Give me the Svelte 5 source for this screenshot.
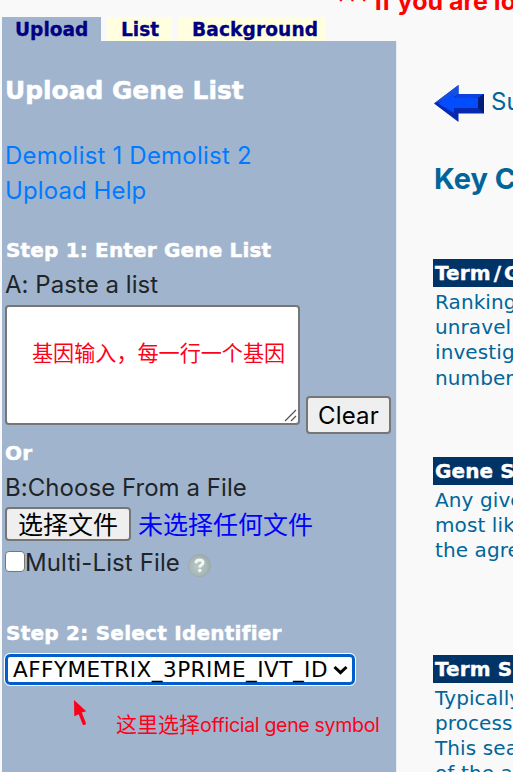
<script>
  const tabs = [
    { label: 'Upload', active: true },
    { label: 'List' },
    { label: 'Background' }
  ];
  const concepts = [
    { title: ['Term', 'G'], lines: ['Ranking', 'unravel', 'investig', 'number'] },
    { title: ['Gene S'], lines: ['Any give', 'most lik', 'the agre'] },
    { title: ['Term S'], lines: ['Typically', 'process', 'This sea', 'of the a'] }
  ];
</script>

<div class="page">
  <aside>
    <nav>
      {#each tabs as tab}
        <a class:active={tab.active} class={tab.label.toLowerCase()}><span>{tab.label}</span></a>
      {/each}
    </nav>
    <div class="panel">
      <h2><span>Upload Gene List</span></h2>
      <div class="links">
        <div><a class="demo">Demolist 1</a> <a class="demo">Demolist 2</a></div>
        <div><a class="help-link">Upload Help</a></div>
      </div>
      <h3 class="step1"><span>Step 1: Enter Gene List</span></h3>
      <div class="row paste"><span>A: Paste a list</span></div>
      <div class="entry">
        <div class="textarea">
          <span class="note">基因输入，每一行一个基因</span>
          <svg class="grip" width="13" height="13" viewBox="0 0 13 13"><path d="M1 12L12 1M7 12L12 7" /></svg>
        </div>
        <button class="clear"><span>Clear</span></button>
      </div>
      <h3 class="or"><span>Or</span></h3>
      <div class="row choose"><span>B:Choose From a File</span></div>
      <div class="file"><button>选择文件</button><span>未选择任何文件</span></div>
      <div class="multi">
        <i class="checkbox"></i><span>Multi-List File</span>
        <svg width="25" height="25" viewBox="0 0 25 25">
          <defs><radialGradient id="ball" cx=".45" cy=".55" r=".6"><stop offset="0" stop-color="#b9c8c2" /><stop offset=".65" stop-color="#a6b8b8" /><stop offset="1" stop-color="#9aa5a8" /></radialGradient></defs>
          <circle cx="12.5" cy="12.5" r="11.2" fill="url(#ball)" stroke="#a2a9ab" stroke-width=".8" />
          <path d="M8.8 10.2Q9.2 7.1 12.6 7.1Q16.2 7.3 16.1 9.7Q16 11 14.2 12.1Q12.8 12.8 12.8 14.4" fill="none" stroke="#f2f5f5" stroke-width="3" />
          <circle cx="12.8" cy="17.6" r="1.8" fill="#f2f5f5" />
        </svg>
      </div>
      <h3 class="step2"><span>Step 2: Select Identifier</span></h3>
      <div class="select">
        <span>AFFYMETRIX_3PRIME_IVT_ID</span>
        <svg width="15" height="10" viewBox="0 0 15 10"><path d="M1.5 2L7.5 7.6L13.5 2" /></svg>
      </div>
      <div class="hint">
        <svg width="14" height="27" viewBox="0 0 14 27"><path d="M0 0L12.3 11.2L7.8 12.6L12 23.2Q11.8 25.4 8.9 25L4.7 14.2L0.3 16.2Z" fill="#ff0019" /></svg>
        <span>这里选择<b>official gene symbol</b></span>
      </div>
    </div>
  </aside>
  <main>
    <div class="banner"><span class="stars">***</span> If you are lo</div>
    <div class="submit">
      <svg width="52" height="40" viewBox="0 0 52 40">
        <path d="M1 19.4L25.5 1V10H51V29.5H25.5V38Z" fill="#0729b0" />
        <path d="M1 19.4L25.5 1V10L21 13Z" fill="#1551df" />
        <path d="M25.5 10H51L46 14H21Z" fill="#0b42dd" />
        <path d="M51 10V29.5L45 24V14Z" fill="#001c79" />
        <path d="M5 19.4L21 9V14H45V24H21V29Z" fill="#044cff" />
      </svg>
      <span>Su</span>
    </div>
    <h1>Key C</h1>
    {#each concepts as concept}
      <section>
        <h4>{concept.title[0]}{#if concept.title[1]}<span class="slash">/</span>{concept.title[1]}{/if}</h4>
        {#each concept.lines as line}<p>{line}</p>{/each}
      </section>
    {/each}
  </main>
</div>

<style>
  :global(body) { background: #f9f9f9; overflow: hidden; }
  .page {
    display: flex;
    width: 513px;
    height: 772px;
    overflow: hidden;
    box-sizing: border-box;
    padding-left: 2px;
    background: #f9f9f9;
    font-family: Inter, "Noto Sans CJK SC", sans-serif;
    white-space: nowrap;
  }
  h1, h2, h3, h4, p { margin: 0; }
  aside { display: flex; flex-direction: column; width: 394px; flex: none; padding-top: 17px; }
  nav { display: flex; gap: 6px; height: 24px; flex: none; }
  nav a {
    box-sizing: border-box;
    padding-left: 14px;
    background: #ffffe0;
    color: #000080;
    font: bold 18.6px/25px "DejaVu Sans", sans-serif;
    -webkit-text-stroke: 0.3px;
  }
  nav .active { padding-left: 13px; background: #a0b5cd; }
  .upload { width: 99px; }
  .list { width: 65px; }
  .background { width: 147px; letter-spacing: 0.1px; }
  .panel { flex: 1; padding-left: 3px; background: #a0b5cd; box-shadow: 1px 0 #e8edf2; }
  h2 { padding-top: 34px; height: 30px; color: #fff; font: bold 24.9px/31px "DejaVu Sans", sans-serif; -webkit-text-stroke: 0.5px; }
  .links { padding-top: 34px; color: #007bff; font-size: 24px; line-height: 34.5px; }
  .demo { letter-spacing: 0.22px; }
  .help-link { letter-spacing: 0.1px; }
  h3 { padding-left: 1px; height: 26px; color: #fff; font: bold 20px/26px "DejaVu Sans", sans-serif; letter-spacing: 0.17px; -webkit-text-stroke: 0.5px; }
  .step1 { padding-top: 29px; }
  .row, .multi { height: 34px; color: #212529; font-size: 24px; line-height: 34px; letter-spacing: 0.05px; }
  .paste { padding-top: 5px; }
  .entry { display: flex; align-items: flex-end; gap: 6px; height: 129px; padding-top: 3px; }
  .textarea {
    position: relative;
    box-sizing: border-box;
    width: 295px;
    height: 120px;
    margin-bottom: 9px;
    padding: 35px 0 0 25px;
    border: 2px solid #767676;
    border-radius: 4px;
    background: #fff;
  }
  .note { color: #ff0019; font-size: 21.1px; line-height: 24px; }
  .grip { position: absolute; right: 1px; bottom: 1px; stroke: #555; stroke-width: 1.3; }
  button {
    box-sizing: border-box;
    padding: 0;
    border: 2px solid #767676;
    border-radius: 4px;
    background: #efefef;
    color: #000;
    font: 24px/34px Inter, "Noto Sans CJK SC", sans-serif;
  }
  .clear { width: 85px; height: 38px; padding-top: 1px; letter-spacing: 0.2px; }
  .or { padding: 6px 0 0; }
  .choose { padding-top: 5px; }
  .file { display: flex; align-items: center; gap: 7px; height: 34px; padding-top: 2px; font-size: 25px; }
  .file button { width: 126px; height: 34px; font-size: 25px; line-height: 32px; }
  .file span { padding-top: 1px; color: #00f; line-height: 34px; }
  .multi { display: flex; align-items: center; padding-top: 4px; letter-spacing: 0.12px; }
  .checkbox { box-sizing: border-box; width: 20px; height: 21px; margin-top: -2px; border: 1.5px solid #767676; border-radius: 4px; background: #fff; }
  .multi span { padding-top: 1px; }
  .multi svg { margin: 6px 0 0 7px; }
  .step2 { padding-top: 41px; letter-spacing: 0.25px; }
  .select {
    display: flex;
    align-items: center;
    justify-content: space-between;
    box-sizing: border-box;
    width: 350px;
    height: 31px;
    margin: 8px 0 0 0;
    padding: 0 4px 0 5px;
    border: 3px solid #005fcc;
    border-radius: 5px;
    outline: 1.5px solid #fff;
    background: #fff;
    color: #000;
    font: 21.5px/24px "DejaVu Sans", sans-serif;
    letter-spacing: 0.49px;
  }
  .select svg { fill: none; stroke: #000; stroke-width: 3; }
  .hint { display: flex; gap: 28px; height: 46px; padding: 15px 0 0 69px; color: #ff0019; font-size: 21px; line-height: 24px; }
  .hint span { padding-top: 13px; }
  .hint b { font-weight: 400; font-size: 19.5px; letter-spacing: -0.3px; }
  main { flex: none; width: 117px; color: #069; }
  .banner { height: 16px; margin-left: -62px; color: #f00; font-size: 25px; font-weight: 700; line-height: 2px; }
  .stars { letter-spacing: -2.4px; }
  .submit { display: flex; gap: 6px; height: 40px; padding: 68px 0 0 37px; font-size: 24px; line-height: 36px; }
  .submit svg { flex: none; }
  h1 { height: 36px; padding: 37px 0 62px 38px; font-size: 29px; font-weight: 700; line-height: 36px; }
  section { height: 197.8px; padding-left: 37px; }
  h4 { height: 28px; margin-bottom: 3px; padding-left: 2px; background: #036; color: #fff; font: bold 20px/29px "DejaVu Sans", sans-serif; letter-spacing: 0.1px; -webkit-text-stroke: 0.4px; }
  .slash { padding: 0 3px 0 3px; }
  p { padding-left: 2px; color: #069; font: 20px/25.2px "DejaVu Sans", sans-serif; letter-spacing: 0.1px; }
</style>
